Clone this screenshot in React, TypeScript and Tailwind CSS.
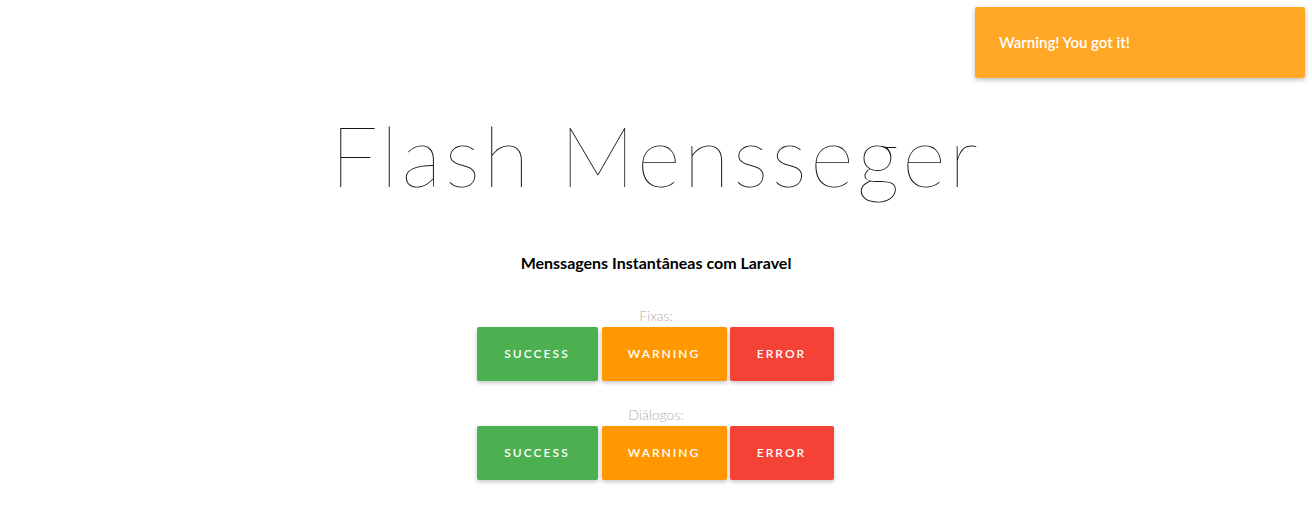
import React from 'react';

type Variant = 'success' | 'warning' | 'error';

const buttonStyles: Record<Variant, string> = {
  success: 'bg-[#4caf50] w-[121px]',
  warning: 'bg-[#ff9800] w-[125px] ml-[4px]',
  error: 'bg-[#f44336] w-[104px] ml-[3px]',
};

const labels: Record<Variant, string> = {
  success: 'Success',
  warning: 'Warning',
  error: 'Error',
};

const FlashButton: React.FC<{ variant: Variant }> = ({ variant }) => (
  <button
    className={`${buttonStyles[variant]} h-[54px] rounded-[2px] text-white text-[12px] font-semibold uppercase tracking-[0.17em] shadow-[0_2px_4px_rgba(0,0,0,0.22)]`}
  >
    {labels[variant]}
  </button>
);

const ButtonGroup: React.FC<{ title: string }> = ({ title }) => (
  <div className="flex flex-col items-center">
    <p className="text-[14px] leading-[16px] font-light text-[#b3aaa8]">{title}</p>
    <div className="flex mt-[3px] pr-[2px]">
      <FlashButton variant="success" />
      <FlashButton variant="warning" />
      <FlashButton variant="error" />
    </div>
  </div>
);

export default function App() {
  return (
    <div
      className="relative w-full h-[530px] bg-white overflow-hidden"
      style={{ fontFamily: 'Lato, "Open Sans", sans-serif' }}
    >
      {/* Toast */}
      <div className="absolute top-[7px] right-[7px] w-[330px] h-[71px] bg-[#ffa726] rounded-[2px] shadow-[0_2px_5px_rgba(0,0,0,0.25)] flex items-center pl-[24px]">
        <span className="text-white text-[15px] font-semibold">Warning! You got it!</span>
      </div>

      <div className="flex flex-col items-center pt-[105px]">
        <h1 className="text-[84px] leading-[100px] font-thin tracking-[3.5px] text-[#151515]">Flash Mensseger</h1>
        <p className="mt-[46px] text-[16px] font-bold text-black">Menssagens Instantâneas com Laravel</p>
        <div className="mt-[33px]">
          <ButtonGroup title="Fixas:" />
        </div>
        <div className="mt-[26px]">
          <ButtonGroup title="Diálogos:" />
        </div>
      </div>
    </div>
  );
}
